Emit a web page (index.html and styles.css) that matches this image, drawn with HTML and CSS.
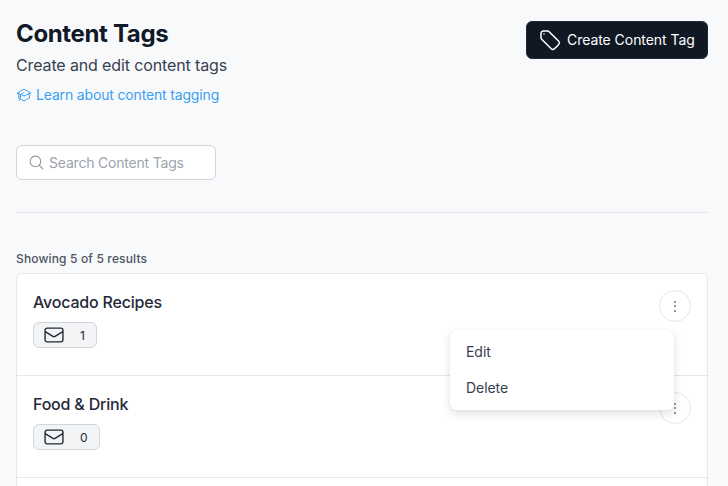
FILE: index.html
```html
<!DOCTYPE html>
<html lang="en">
<head>
<meta charset="utf-8">
<title>Content Tags</title>
<link rel="stylesheet" href="styles.css">
</head>
<body>
<main class="page">
  <header class="header">
    <div class="intro">
      <h1 class="title">Content Tags</h1>
      <p class="subtitle">Create and edit content tags</p>
      <a class="learn" href="#">
        <svg class="learn-icon" viewBox="0 0 24 24" fill="none" stroke="currentColor" stroke-width="1.500" stroke-linecap="round" stroke-linejoin="round"><path d="M4.26 10.147a60.438 60.438 0 0 0-.491 6.347A48.62 48.62 0 0 1 12 20.904a48.62 48.62 0 0 1 8.232-4.41 60.46 60.46 0 0 0-.491-6.347m-15.482 0a50.636 50.636 0 0 0-2.658-.813A59.906 59.906 0 0 1 12 3.493a59.903 59.903 0 0 1 10.399 5.84c-.896.248-1.783.52-2.658.814m-15.482 0A50.717 50.717 0 0 1 12 13.489a50.702 50.702 0 0 1 7.74-3.342M6.75 15a.75.75 0 1 0 0-1.5.75.75 0 0 0 0 1.5Zm0 0v-3.675A55.378 55.378 0 0 1 12 8.443m-7.007 11.55A5.981 5.981 0 0 0 6.75 15.75v-1.5"/></svg>
        Learn about content tagging
      </a>
    </div>
    <button class="create" type="button">
      <svg class="create-icon" viewBox="0 0 24 24" fill="none" stroke="currentColor" stroke-width="1.500" stroke-linecap="round" stroke-linejoin="round"><path d="M9.568 3H5.25A2.25 2.25 0 0 0 3 5.25v4.318c0 .597.237 1.17.659 1.591l9.581 9.581c.699.699 1.78.872 2.607.33a18.095 18.095 0 0 0 5.223-5.223c.542-.827.369-1.908-.33-2.607L11.16 3.66A2.25 2.25 0 0 0 9.568 3Z"/><path d="M6 6h.008v.008H6V6Z"/></svg>
      Create Content Tag
    </button>
  </header>

  <label class="search">
    <svg class="search-icon" viewBox="0 0 24 24" fill="none" stroke="currentColor" stroke-width="1.500" stroke-linecap="round" stroke-linejoin="round"><path d="m21 21-5.197-5.197m0 0A7.5 7.5 0 1 0 5.196 5.196a7.5 7.5 0 0 0 10.607 10.607Z"/></svg>
    <span class="search-text">Search Content Tags</span>
  </label>

  <hr class="divider">

  <p class="count">Showing 5 of 5 results</p>

  <section class="list">
    <article class="row">
      <div>
        <h2 class="name">Avocado Recipes</h2>
        <span class="badge">
          <svg class="mail" viewBox="0 0 24 24" fill="none" stroke="currentColor" stroke-width="1.500" stroke-linejoin="round" stroke-linecap="round"><path d="M21.75 6.75v10.5a2.25 2.25 0 0 1-2.25 2.25h-15a2.25 2.25 0 0 1-2.25-2.25V6.75m19.5 0A2.25 2.25 0 0 0 19.5 4.5h-15a2.25 2.25 0 0 0-2.25 2.25m19.5 0v.243a2.25 2.25 0 0 1-1.07 1.916l-7.5 4.615a2.25 2.25 0 0 1-2.36 0L3.32 8.91a2.25 2.25 0 0 1-1.07-1.916V6.75"/></svg>
          <span>1</span>
        </span>
      </div>
      <button class="kebab" type="button" aria-label="More"><i></i><i></i><i></i></button>
      <div class="menu">
        <span class="menu-item">Edit</span>
        <span class="menu-item">Delete</span>
      </div>
    </article>
    <article class="row">
      <div>
        <h2 class="name">Food &amp; Drink</h2>
        <span class="badge">
          <svg class="mail" viewBox="0 0 24 24" fill="none" stroke="currentColor" stroke-width="1.500" stroke-linejoin="round" stroke-linecap="round"><path d="M21.75 6.75v10.5a2.25 2.25 0 0 1-2.25 2.25h-15a2.25 2.25 0 0 1-2.25-2.25V6.75m19.5 0A2.25 2.25 0 0 0 19.5 4.5h-15a2.25 2.25 0 0 0-2.25 2.25m19.5 0v.243a2.25 2.25 0 0 1-1.07 1.916l-7.5 4.615a2.25 2.25 0 0 1-2.36 0L3.32 8.91a2.25 2.25 0 0 1-1.07-1.916V6.75"/></svg>
          <span>0</span>
        </span>
      </div>
      <button class="kebab" type="button" aria-label="More"><i></i><i></i><i></i></button>
    </article>
    <article class="row"></article>
  </section>
</main>
</body>
</html>
```

FILE: styles.css
```css
* { box-sizing: border-box; }
html, body { margin: 0; height: 100%; overflow: hidden; }
body {
  background: #f8f9fb;
  color: #111827;
  font-family: Inter, "Liberation Sans", sans-serif;
}
.page { height: 100vh; overflow: hidden; padding: 21px 20px 0 16px; }
.header { display: flex; justify-content: space-between; align-items: flex-start; }
.title { margin: 1px 0 0; font-size: 24px; line-height: 24px; font-weight: 700; letter-spacing: -.35px; color: #111827; }
.subtitle { margin: 7px 0 0; font-size: 16px; line-height: 24px; letter-spacing: -.13px; color: #374151; }
.learn {
  display: flex; align-items: center; gap: 4px;
  margin-top: 8px;
  font-size: 14px; line-height: 20px; letter-spacing: -.16px;
  color: #3b9ff0; text-decoration: none;
}
.learn-icon { width: 16px; height: 16px; flex: none; }
.create {
  display: flex; align-items: center; gap: 5px;
  width: 182px; height: 38px;
  padding: 0 11px;
  background: #101823;
  border: 1px solid #1f2937;
  border-radius: 6px;
  color: #fff;
  font: 400 14px/20px Inter, "Liberation Sans", sans-serif;
  letter-spacing: -.05px;
  white-space: nowrap;
}
.create-icon { width: 24px; height: 24px; flex: none; }
.search {
  display: flex; align-items: center; gap: 4px;
  width: 200px; height: 35px;
  margin-top: 40px;
  padding: 0 11px;
  background: #fff;
  border: 1px solid #d1d5db;
  border-radius: 6px;
  color: #9ca3af;
  font-size: 14px; letter-spacing: -.2px;
}
.search-icon { width: 17px; height: 17px; color: #8f96a3; flex: none; }
.divider { height: 1px; margin: 32px 0 0; border: 0; background: #e5e7eb; }
.count { margin: 38px 0 0; font-size: 12px; line-height: 16px; font-weight: 500; letter-spacing: .15px; color: #4b5563; }
.list {
  margin-top: 6px;
  background: #fff;
  border: 1px solid #e5e7eb;
  border-radius: 6px;
}
.row {
  position: relative;
  display: flex; justify-content: space-between; align-items: flex-start;
  height: 102px;
  padding: 16px 16px 0;
  border-bottom: 1px solid #e5e7eb;
}
.name { margin: 0 0 8px; font-size: 16px; line-height: 24px; font-weight: 500; letter-spacing: -.2px; color: #1f2937; }
.badge {
  display: inline-flex; align-items: center; gap: 15px;
  height: 26px;
  padding: 0 11px 0 9px;
  background: #f3f4f6;
  border: 1px solid #d1d5db;
  border-radius: 6px;
  font-size: 12px; font-weight: 400; color: #1f2937;
}
.mail { width: 22px; height: 22px; flex: none; color: #1f2937; }
.kebab {
  display: flex; flex-direction: column; align-items: center; justify-content: center; gap: 2.500px;
  width: 32px; height: 32px;
  padding: 0;
  background: #fff;
  border: 1px solid #e5e7eb;
  border-radius: 50%;
}
.kebab i { width: 2px; height: 2px; border-radius: 50%; background: #6b7280; }
.menu {
  position: absolute; z-index: 2;
  top: 56px; right: 33px;
  display: flex; flex-direction: column;
  width: 224px; height: 80px;
  padding: 4px 0;
  background: #fff;
  border-radius: 6px;
  box-shadow: 0 0 1px rgba(17,24,39,.2), 0 4px 10px rgba(17,24,39,.12);
}
.menu-item { padding: 0 16px; font-size: 14px; line-height: 36px; letter-spacing: -.05px; color: #374151; }
```
